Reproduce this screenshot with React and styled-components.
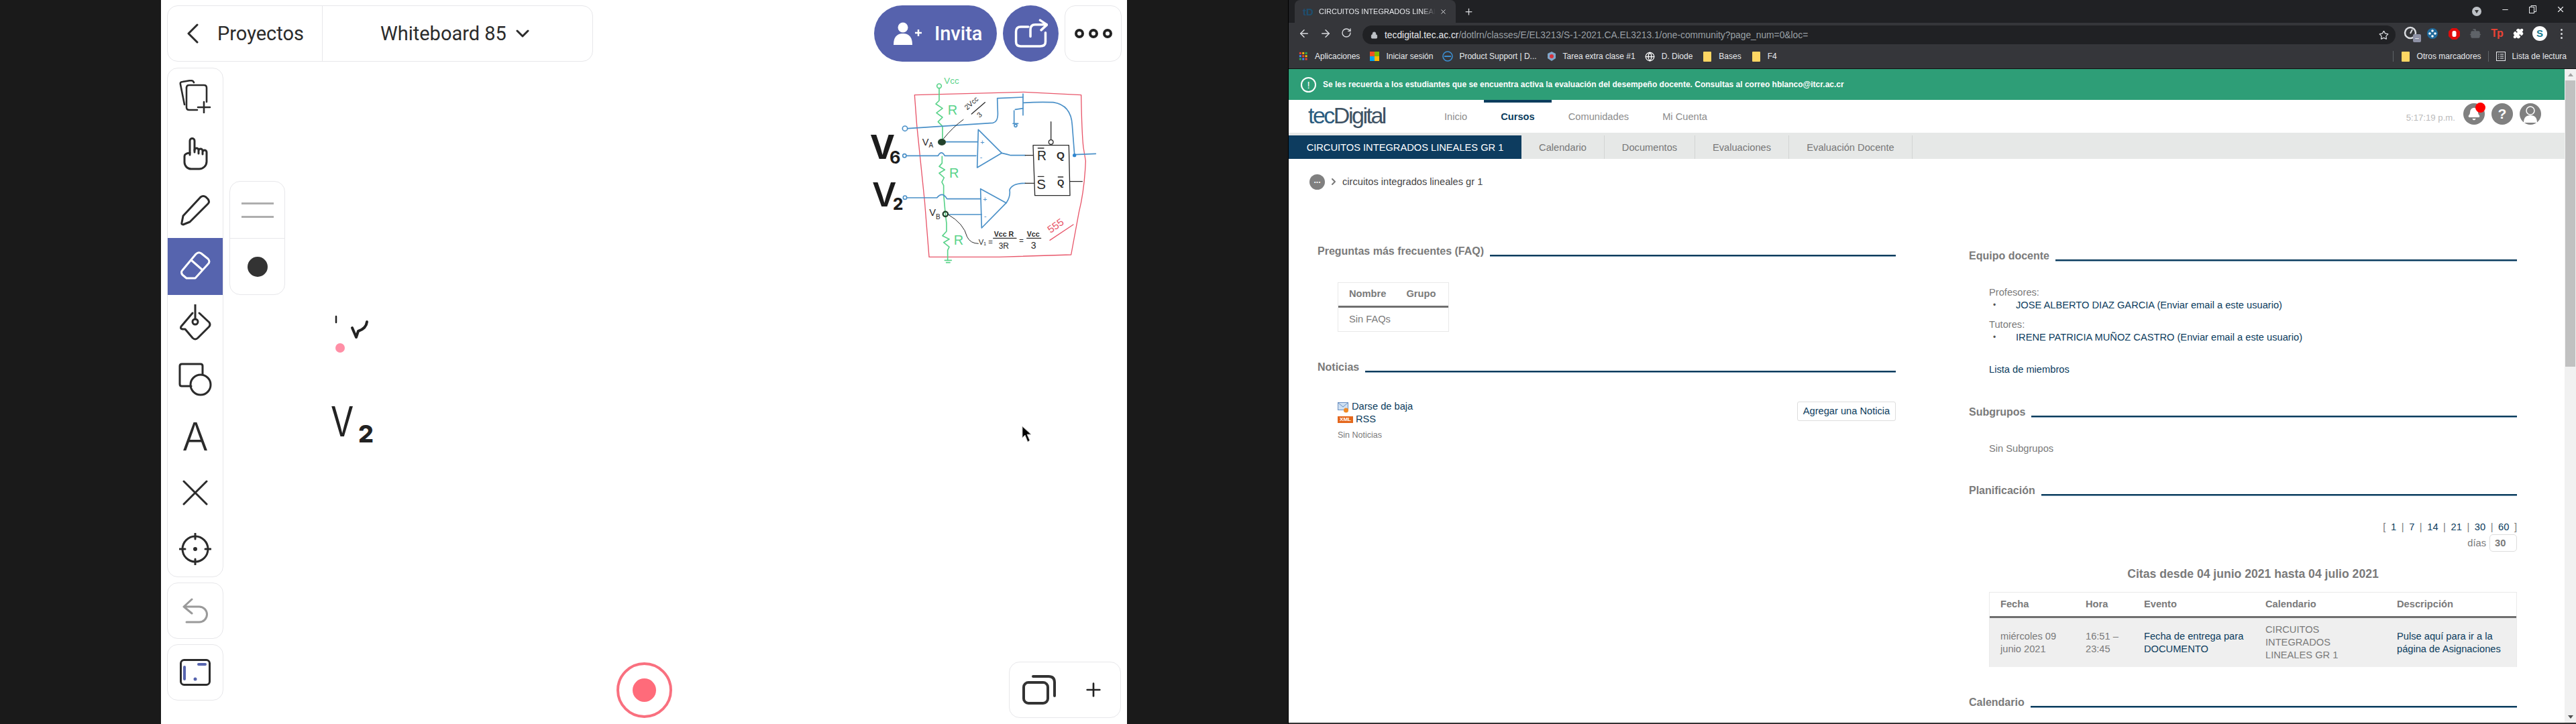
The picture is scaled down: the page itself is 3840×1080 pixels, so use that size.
import React from "react";
import styled, { createGlobalStyle } from "styled-components";
import { ArrowLeft, ArrowRight, RotateCw, Lock, Star, Plus, X, Minus, Bell, Puzzle, Bot, ChevronRight, Globe } from "lucide-react";

const SANS = `"Liberation Sans", Arial, sans-serif`;
const NAVY = "#0b3c5d";
const GREY = "#7a7a7a";

const Global = createGlobalStyle`
  html, body { margin: 0; padding: 0; background: #1a1a1a; overflow: hidden; }
  * { box-sizing: border-box; }
  body { font-family: ${SANS}; }
`;

const Screen = styled.div`
  width: 3840px; height: 1080px; display: flex; background: #1a1a1a; overflow: hidden;
`;

/* ---------- whiteboard ---------- */
const Board = styled.section`
  position: relative; width: 1440px; height: 1080px; margin-left: 240px; margin-right: 241px;
  background: #fff; padding: 8px 8px 0 9px; display: flex; flex-direction: column; gap: 9px; flex: none;
  font-family: Inter, sans-serif; color: #2b2b2b;
`;
const TopRow = styled.div` display: flex; height: 84px; `;
const TitleBar = styled.div`
  width: 635px; display: flex; border: 1px solid #e7e7ea; border-radius: 16px; background: #fff;
`;
const BackCell = styled.div`
  width: 231px; display: flex; align-items: center; padding-left: 28px; gap: 28px;
  border-right: 1px solid #e7e7ea; font-size: 29px; font-family: Roboto, sans-serif;
`;
const NameCell = styled.div`
  flex: 1; display: flex; align-items: center; padding-left: 86px; gap: 14px; font-size: 29px; font-family: Roboto, sans-serif;
`;
const Actions = styled.div` margin-left: auto; display: flex; gap: 9px; `;
const InviteButton = styled.div`
  width: 183px; border-radius: 42px; background: #5662ad; color: #fff; display: flex; align-items: center;
  padding-left: 28px; gap: 18px; font: 500 29px Roboto, sans-serif;
`;
const ShareButton = styled.div`
  width: 83px; border-radius: 50%; background: #5662ad; display: flex; align-items: center; justify-content: center;
`;
const MoreButton = styled.div`
  width: 85px; border: 1px solid #e7e7ea; border-radius: 16px; display: flex; align-items: center; justify-content: center; gap: 7px;
`;
const MoreDot = styled.span` width: 14px; height: 14px; border: 4px solid #222; border-radius: 50%; `;

const WorkRow = styled.div` display: flex; gap: 9px; align-items: flex-start; `;
const RailColumn = styled.div` display: flex; flex-direction: column; gap: 8px; width: 84px; `;
const Panel = styled.div`
  border: 1px solid #e7e7ea; border-radius: 16px; background: #fff; overflow: hidden;
`;
const Rail = styled(Panel)` height: 760px; display: flex; flex-direction: column; `;
const RailItem = styled.div`
  height: 84.4px; display: flex; align-items: center; justify-content: center; flex: none;
  background: ${p => (p.$active ? "#5664ae" : "transparent")};
  color: ${p => (p.$active ? "#fff" : "#2b2b2b")};
`;
const TextTool = styled.span` font: 300 58px Inter, sans-serif; line-height: 1; `;
const SmallPanel = styled(Panel)` height: 84px; display: flex; align-items: center; justify-content: center; `;
const SubPanel = styled(Panel)` width: 83px; height: 170px; margin-top: 169px; display: flex; flex-direction: column; `;
const SubCell = styled.div`
  height: 85px; display: flex; flex-direction: column; align-items: center; justify-content: center; gap: 17px;
  & + & { border-top: 1px solid #e7e7ea; }
`;
const WidthLine = styled.span` width: 48px; height: 3px; background: #aeaeae; `;
const InkDot = styled.span` width: 30px; height: 30px; border-radius: 50%; background: #333; `;

const RecordButton = styled.div`
  position: absolute; left: 679px; top: 988px; width: 83px; height: 83px; border-radius: 50%;
  border: 4px solid #f9707f; display: flex; align-items: center; justify-content: center;
`;
const RecordCore = styled.span` width: 35px; height: 35px; border-radius: 50%; background: #ff6b7a; `;
const PagesPanel = styled(Panel)`
  position: absolute; right: 9px; top: 987px; width: 167px; height: 84px; display: flex; align-items: center;
  padding-left: 19px; gap: 40px;
`;
const CanvasLayer = styled.svg` position: absolute; pointer-events: none; overflow: visible; `;
const SketchText = styled.text`
  font-family: ${p => p.$family || SANS}; font-weight: ${p => p.$weight || 400};
  font-size: ${p => p.$size}px; fill: ${p => p.$fill};
`;
const PinkDot = styled.span`
  position: absolute; left: 260px; top: 512px; width: 14px; height: 14px; border-radius: 50%; background: #ff8fa6;
`;

const S = ({ children, w = 48, h = 48, sw = 3, c = "currentColor", vb }) => (
  <svg width={w} height={h} viewBox={vb || `0 0 ${w} ${h}`} fill="none" stroke={c} strokeWidth={sw} strokeLinecap="round" strokeLinejoin="round">{children}</svg>
);

const Sketch = () => (
  <CanvasLayer style={{ left: 1010, top: 100 }} width="450" height="300" viewBox="0 300 1350 900" fill="none" strokeLinecap="round" strokeLinejoin="round">
    <g stroke="#e8566a" strokeWidth="4">
      <path d="M340 425 L830 412 L1085 425 Q1088 600 1095 660 L1105 720 Q1100 850 1075 950 L1040 1140 L720 1150 L405 1150 L385 900 L350 560 Z" />
      <path d="M945 1075 L1050 1005" />
    </g>
    <g stroke="#5ad38a" strokeWidth="5">
      <circle cx="450" cy="385" r="10" />
      <path d="M450 395 V450 L435 465 L465 485 L438 505 L465 525 L445 545 L465 565 V635" />
      <path d="M463 700 V730 L450 745 L475 760 L450 775 L472 795 L462 815 L470 830 V870 L478 960 L483 1000 V1035 L465 1055 L495 1070 L470 1085 L495 1105 L488 1120 V1165" />
      <path d="M475 1165 H505 M482 1175 H498" />
    </g>
    <g stroke="#4a90c8" strokeWidth="5">
      <circle cx="297" cy="575" r="11" />
      <path d="M310 575 L690 550 Q715 545 712 500 L710 440 L825 435" />
      <path d="M825 420 V515 M825 460 Q900 455 960 458 Q1040 470 1045 560 L1055 690 M1055 692 L1150 688" />
      <path d="M790 490 L825 485 M785 495 V550 M780 553 H803" />
      <circle cx="792" cy="562" r="6" />
      <path d="M625 580 L730 685 L620 750 Z" />
      <path d="M470 635 H620 M305 697 H445 Q460 670 475 697 H615 M730 685 Q755 690 770 695 H835" />
      <circle cx="295" cy="697" r="8" />
      <path d="M635 845 L750 908 L640 1020 Z" />
      <path d="M305 885 H440 Q465 855 485 890 H635 M490 960 H640 M750 908 Q770 880 765 850 Q775 820 835 820" />
      <circle cx="297" cy="884" r="8" />
    </g>
    <circle cx="1055" cy="695" r="8" fill="#2f86d0" />
    <g stroke="#2a2a2a" strokeWidth="4">
      <path d="M835 695 H870 M835 820 H875 M870 650 H1030 L1035 875 L878 875 Z M950 545 V625 M1035 812 H1090" />
      <circle cx="950" cy="636" r="10" />
      <path d="M470 620 Q510 570 558 535 M490 960 Q560 1000 575 1060 Q590 1090 625 1090" strokeWidth="3" />
      <path d="M892 663 H918 M892 790 H918 M982 792 H1004 M692 1066 H795 M842 1066 H905 M595 510 L655 458" />
    </g>
    <ellipse cx="462" cy="636" rx="18" ry="15" fill="#22422c" />
    <circle cx="478" cy="958" r="11" stroke="#22422c" strokeWidth="7" />
    <SketchText $size={60} $fill="#5ad38a" x="488" y="513">R</SketchText>
    <SketchText $size={60} $fill="#5ad38a" x="495" y="796">R</SketchText>
    <SketchText $size={60} $fill="#5ad38a" x="515" y="1094">R</SketchText>
    <SketchText $size={40} $fill="#5ad38a" x="472" y="376">Vcc</SketchText>
    <SketchText $size={44} $fill="#2a2a2a" x="374" y="650">V<tspan fontSize="30" dy="10">A</tspan></SketchText>
    <SketchText $size={44} $fill="#2a2a2a" x="406" y="966">V<tspan fontSize="30" dy="14">B</tspan></SketchText>
    <SketchText $size={32} $fill="#4a90c8" x="634" y="648">+</SketchText>
    <SketchText $size={32} $fill="#4a90c8" x="632" y="714">-</SketchText>
    <SketchText $size={32} $fill="#4a90c8" x="646" y="903">+</SketchText>
    <SketchText $size={32} $fill="#4a90c8" x="651" y="978">-</SketchText>
    <SketchText $size={58} $fill="#2a2a2a" x="888" y="718">R</SketchText>
    <SketchText $size={46} $weight={700} $fill="#2a2a2a" x="975" y="712">Q</SketchText>
    <SketchText $size={62} $fill="#2a2a2a" x="886" y="846">S</SketchText>
    <SketchText $size={40} $weight={700} $fill="#2a2a2a" x="978" y="832">Q</SketchText>
    <SketchText $size={32} $fill="#2a2a2a" transform="rotate(-42 590 480)" x="570" y="480">2Vcc</SketchText>
    <SketchText $size={32} $fill="#2a2a2a" transform="rotate(-42 640 520)" x="628" y="520">3</SketchText>
    <SketchText $size={34} $fill="#2a2a2a" x="626" y="1095">V₁ =</SketchText>
    <SketchText $size={32} $weight={700} $fill="#2a2a2a" x="695" y="1058">Vcc R</SketchText>
    <SketchText $size={36} $fill="#2a2a2a" x="716" y="1114">3R</SketchText>
    <SketchText $size={34} $fill="#2a2a2a" x="808" y="1090">=</SketchText>
    <SketchText $size={32} $weight={700} $fill="#2a2a2a" x="842" y="1060">Vcc</SketchText>
    <SketchText $size={42} $fill="#2a2a2a" x="860" y="1112">3</SketchText>
    <SketchText $size={46} $fill="#e8566a" transform="rotate(-35 948 1045)" x="948" y="1045">555</SketchText>
    <SketchText $size={150} $weight={700} $family="Inter, sans-serif" $fill="#1c1c1c" x="140" y="712">V<tspan fontSize="76" dx="-24" dy="21">6</tspan></SketchText>
    <SketchText $size={150} $weight={600} $family="Inter, sans-serif" $fill="#1c1c1c" x="150" y="925">V<tspan fontSize="72" fontWeight="800" dx="-16" dy="15">2</tspan></SketchText>
  </CanvasLayer>
);

const LooseInk = () => (
  <CanvasLayer style={{ left: 240, top: 460 }} width="100" height="210" viewBox="0 0 100 210" fill="none" strokeLinecap="round" strokeLinejoin="round">
    <path d="M261 12 V21" stroke="#222" strokeWidth="2.5" transform="translate(-240 0)" />
    <path d="M307 20 Q306 30 294 34 L291 43 M285 29 L291 43" stroke="#222" strokeWidth="4" transform="translate(-240 0)" />
  </CanvasLayer>
);
const V2Ink = () => (
  <CanvasLayer style={{ left: 250, top: 600 }} width="90" height="70" viewBox="0 0 90 70">
    <SketchText $size={62} $weight={400} $family="Inter, sans-serif" $fill="#222" transform="translate(3 0) scale(.8 1)" x="0" y="51">V</SketchText>
    <SketchText $size={36} $weight={800} $family="Inter, sans-serif" $fill="#222" x="44" y="60">2</SketchText>
  </CanvasLayer>
);
const Cursor = () => (
  <CanvasLayer style={{ left: 1283, top: 635 }} width="16" height="26" viewBox="0 0 16 26">
    <path d="M1 1 L1 18 L5 14 L9 24 L12 22 L8 13 L14 13 Z" fill="#000" stroke="#bbb" strokeWidth="1" />
  </CanvasLayer>
);

const Whiteboard = () => (
  <Board>
    <TopRow>
      <TitleBar>
        <BackCell>
          <S w={18} h={30} sw={3}><path d="M16 2 L3 15 L16 28" /></S>
          Proyectos
        </BackCell>
        <NameCell>
          Whiteboard 85
          <S w={20} h={14} sw={3}><path d="M2 3 L10 11 L18 3" /></S>
        </NameCell>
      </TitleBar>
      <Actions>
        <InviteButton>
          <svg width="44" height="34" viewBox="0 0 44 34" fill="#fff">
            <circle cx="15" cy="8" r="7.5" />
            <path d="M1 34 Q1 17 15 17 Q29 17 29 34 Z" />
            <path d="M33 16 h10 M38 11 v10" stroke="#fff" strokeWidth="2.5" />
          </svg>
          Invita
        </InviteButton>
        <ShareButton>
          <S w={50} h={44} vb="785 78 156 136" sw={11} c="#fff">
            <path d="M850 115 H815 Q793 115 793 137 V185 Q793 205 815 205 H905 Q930 205 930 185 V142" />
            <path d="M860 160 V128 Q860 105 882 105 H935 M905 84 L937 105 L910 130" />
          </S>
        </ShareButton>
        <MoreButton><MoreDot /><MoreDot /><MoreDot /></MoreButton>
      </Actions>
    </TopRow>
    <WorkRow>
      <RailColumn>
        <Rail>
          <RailItem>
            <S h={50} sw={2.6}><path d="M8 37 L2 7 Q1 3 5 3 L17 1 Q21 1 22 4" /><path d="M11 12 Q11 8 15 8 H37 Q41 8 41 12 V33" /><path d="M11 12 V41 Q11 45 15 45 H27" /><path d="M28 41 H46 M37 33 V49" /></S>
          </RailItem>
          <RailItem>
            <S w={48} h={52}><path d="M16 28 V7 A3.5 3.5 0 0 1 23 7 V24" /><path d="M23 21 A3 3 0 0 1 29 21 V26 M29 22 A3 3 0 0 1 35 22 V27 M35 24 A3 3 0 0 1 41 24 V38 A11 11 0 0 1 30 49 H18 A10 10 0 0 1 8 39 V30 Q8 26 16 25" /></S>
          </RailItem>
          <RailItem>
            <S><path d="M6 33 L32 5 Q36 2 40 5 L43 8 Q46 12 43 15 L16 42 L6 46 Q3 46 4 43 Z" /></S>
          </RailItem>
          <RailItem $active>
            <S><path d="M5 30 L25 6 Q29 2 33 5 L43 13 Q47 17 43 21 L24 42 H11 L5 37 Q2 33 5 30 Z" /><path d="M18 15 L34 29" /></S>
          </RailItem>
          <RailItem>
            <S w={50} h={56}><path d="M25 0 V22" /><circle cx="25" cy="26" r="4" /><path d="M21 13 L4 33 Q2 36 6 37 L10 37 L21 50 Q25 54 29 50 L46 33 Q48 30 46 27 L31 13" /></S>
          </RailItem>
          <RailItem>
            <S w={50} h={50}><path d="M19 35 H5 Q2 35 2 32 V5 Q2 2 5 2 H33 Q36 2 36 5 V17" /><circle cx="33" cy="33" r="15" /></S>
          </RailItem>
          <RailItem><TextTool>A</TextTool></RailItem>
          <RailItem>
            <S w={38} h={38}><path d="M2 2 L36 36 M36 2 L2 36" /></S>
          </RailItem>
          <RailItem>
            <S><circle cx="24" cy="24" r="19" /><circle cx="24" cy="24" r="1.5" fill="currentColor" /><path d="M24 1 V9 M24 39 V47 M1 24 H9 M39 24 H47" /></S>
          </RailItem>
        </Rail>
        <SmallPanel>
          <S w={40} h={38} c="#9a9a9a"><path d="M3 13 L15 2 M3 13 L15 23 M3 13 H26 A11.5 11.5 0 0 1 26 36 H7" /></S>
        </SmallPanel>
        <SmallPanel>
          <svg width="46" height="40" viewBox="0 0 46 40" fill="none">
            <rect x="1.5" y="1.5" width="43" height="37" rx="5" stroke="#2b2b2b" strokeWidth="3" />
            <path d="M7 12 V30 M28 8 H38" stroke="#5664ae" strokeWidth="4" strokeLinecap="round" />
            <circle cx="23" cy="30" r="2.5" fill="#5664ae" />
          </svg>
        </SmallPanel>
      </RailColumn>
      <SubPanel>
        <SubCell><WidthLine /><WidthLine /></SubCell>
        <SubCell><InkDot /></SubCell>
      </SubPanel>
    </WorkRow>
    <Sketch />
    <LooseInk />
    <PinkDot />
    <V2Ink />
    <Cursor />
    <RecordButton><RecordCore /></RecordButton>
    <PagesPanel>
      <S w={50} h={44} c="#333" sw={4}><rect x="2" y="11" width="36" height="31" rx="7" /><path d="M16 2 H39 Q48 2 48 11 V31" /></S>
      <Plus size={32} strokeWidth={2} color="#222" />
    </PagesPanel>
  </Board>
);

/* ---------- browser chrome ---------- */
const Browser = styled.section`
  width: 1919px; height: 1080px; display: flex; flex-direction: column; flex: none; font-family: ${SANS}; background: #fff;
  box-shadow: -1px 0 0 #000;
`;
const TabStrip = styled.div` height: 34px; background: #202124; display: flex; align-items: stretch; padding-left: 9px; color: #e8eaed; flex: none; `;
const ChromeTab = styled.div`
  width: 240px; background: #35363a; border-radius: 8px 8px 0 0; display: flex; align-items: center; padding: 0 10px 0 12px; gap: 6px;
`;
const Favicon = styled.span` font: 700 15px ${SANS}; color: #1e4e6e; width: 18px; `;
const TabTitle = styled.span`
  width: 174px; font-size: 11px; white-space: nowrap; overflow: hidden; color: #e8eaed;
  -webkit-mask-image: linear-gradient(90deg, #000 88%, transparent);
  mask-image: linear-gradient(90deg, #000 88%, transparent);
`;
const NewTab = styled.div` display: flex; align-items: center; margin-left: 12px; `;
const WindowControls = styled.div` margin-left: auto; display: flex; align-items: center; gap: 29px; padding: 0 16px 6px 0; `;
const ProfileChip = styled.span`
  width: 14px; height: 14px; border-radius: 50%; background: #bdc1c6; margin-top: 6px; display: flex; align-items: center; justify-content: center;
  &::after { content: ""; border-left: 3px solid transparent; border-right: 3px solid transparent; border-top: 5px solid #333; }
`;
const Toolbar = styled.div` height: 32px; background: #35363a; display: flex; align-items: center; padding-left: 14px; color: #dadce0; flex: none; `;
const NavGroup = styled.div` display: flex; gap: 14px; width: 96px; `;
const Omnibox = styled.div`
  align-self: flex-end; height: 28px; width: 1540px; background: #202124; border-radius: 14px; display: flex; align-items: center; padding: 0 10px 0 12px;
`;
const Url = styled.span` margin-left: 10px; font-size: 13.8px; white-space: nowrap; color: #9aa0a6; `;
const UrlHost = styled.span` color: #e8eaed; `;
const Extensions = styled.div` display: flex; align-items: center; margin-left: 7px; `;
const ExtSlot = styled.span` width: 32px; height: 28px; display: flex; align-items: center; justify-content: center; position: relative; `;
const ExtBadge = styled.span`
  position: absolute; right: 1px; bottom: 1px; width: 12px; height: 12px; border-radius: 2px; background: #8f92a6; color: #fff; font: 700 8px ${SANS}; text-align: center; line-height: 11px;
`;
const TpMark = styled.span` color: #ea4335; font: 700 16px ${SANS}; letter-spacing: -1px; `;
const AvatarMark = styled.span`
  width: 22px; height: 22px; border-radius: 50%; background: #fff; color: #167a8f; font: 700 15px ${SANS}; text-align: center; line-height: 22px;
`;
const DotMenu = styled.span` display: flex; flex-direction: column; gap: 3px; `;
const DotPip = styled.i` width: 3px; height: 3px; border-radius: 50%; background: #dadce0; `;
const BookmarkBar = styled.div`
  height: 37px; background: #35363a; border-bottom: 1px solid #111; display: flex; align-items: center; padding: 0 14px 0 14px; color: #e8eaed; font-size: 12px; flex: none; gap: 14px;
`;
const Bookmark = styled.span` display: flex; align-items: center; gap: 9px; white-space: nowrap; `;
const BarDivider = styled.span` width: 1px; height: 16px; background: #5f6368; `;
const BarRight = styled.div` margin-left: auto; display: flex; align-items: center; gap: 10px; `;
const FolderGlyph = styled.span` width: 12px; height: 15px; background: #fdd663; border-radius: 1px; margin: 0 2px; `;
const IconBox = styled.span` width: 16px; height: 16px; display: flex; align-items: center; justify-content: center; `;

const PageWrap = styled.div` flex: 1; min-height: 0; display: flex; `;
const Page = styled.div` width: 1902px; display: flex; flex-direction: column; overflow: hidden; `;
const ScrollTrack = styled.div` width: 17px; background: #f1f1f1; display: flex; flex-direction: column; align-items: center; `;
const ScrollArrow = styled.span`
  height: 17px; flex: none; display: flex; align-items: center;
  margin-top: ${p => (p.$down ? "auto" : 0)};
  &::after { content: ""; border-left: 4px solid transparent; border-right: 4px solid transparent;
    ${p => (p.$down ? "border-top: 5px solid #505050;" : "border-bottom: 5px solid #a3a3a3;")} }
`;
const ScrollThumb = styled.span` width: 15px; height: 427px; background: #c1c1c1; `;
const BottomEdge = styled.div` height: 2px; background: #333; flex: none; `;

const Alert = styled.div`
  height: 46px; background: #2e9e77; color: #fff; display: flex; align-items: center; padding-left: 18px; gap: 10px; font: 700 12px ${SANS}; flex: none;
`;
const AlertIcon = styled.span`
  width: 23px; height: 23px; border: 2px solid #fff; border-radius: 50%; font-size: 15px; font-weight: 400; display: flex; align-items: center; justify-content: center;
`;
const SiteHeader = styled.div` height: 49px; display: flex; padding-left: 29px; padding-right: 35px; flex: none; `;
const Logo = styled.div` width: 178px; font: 300 34px ${SANS}; letter-spacing: -2.5px; color: #3e5263; line-height: 46px; `;
const LogoTec = styled.span` color: #2a5c80; `;
const MainNav = styled.div` display: flex; `;
const MainLink = styled.div`
  padding: 0 25px 3px; display: flex; align-items: center; font-size: 14.67px;
  border-top: 4px solid ${p => (p.$current ? NAVY : "transparent")};
  color: ${p => (p.$current ? NAVY : "#8c8c8c")}; font-weight: ${p => (p.$current ? 700 : 400)};
`;
const UserTools = styled.div` margin-left: auto; display: flex; align-items: flex-start; padding-top: 5px; gap: 10px; position: relative; `;
const Clock = styled.span` font-size: 13.2px; color: #bbb; margin: 14px 2px 0 0; `;
const RoundTool = styled.span`
  width: 32px; height: 32px; border-radius: 50%; background: #808080; color: #fff; display: flex; align-items: center; justify-content: center; position: relative; overflow: visible; font: 700 21px ${SANS};
`;
const RedPip = styled.span` position: absolute; right: -1px; top: -1px; width: 15px; height: 15px; background: #f00; border-radius: 50%; `;
const TabBar = styled.div` height: 39px; background: #e6e8e7; padding-top: 4px; display: flex; flex: none; font-size: 14.67px; `;
const ClassTab = styled.div` width: 347px; background: #0d3c5f; color: #fff; display: flex; align-items: center; justify-content: center; `;
const SubTab = styled.div` width: ${p => p.$w}px; display: flex; align-items: center; justify-content: center; color: #777; border-right: 1px solid #d2d4d3; `;
const Crumbs = styled.div` display: flex; align-items: center; padding: 22px 0 0 31px; gap: 5px; font-size: 14.67px; color: #444; height: 46px; flex: none; `;
const CrumbDot = styled.span`
  width: 23px; height: 23px; border-radius: 50%; background: #808080; color: #fff; display: flex; align-items: center; justify-content: center; font: 700 12px ${SANS}; line-height: 10px; padding-bottom: 5px;
`;
const Columns = styled.div` display: flex; padding-left: 43px; gap: 109px; flex: 1; font-size: 14.67px; color: ${GREY}; line-height: 19px; `;
const LeftColumn = styled.div` width: 862px; padding-top: 82px; flex: none; `;
const RightColumn = styled.div` width: 817px; padding-top: 89px; flex: none; `;
const SectionHead = styled.div` display: flex; gap: 9px; height: 20px; line-height: 20px; margin-top: ${p => p.$mt || 0}px; `;
const SectionTitle = styled.h3` margin: 0; font: 700 16px/20px ${SANS}; color: ${GREY}; white-space: nowrap; `;
const SectionRule = styled.span` flex: 1; height: 2px; margin-top: 15px; background: ${NAVY}; box-shadow: 0 1px 0 #7f9cb3; `;
const FaqTable = styled.div` width: 166px; height: 74px; margin: 36px 0 0 30px; border: 1px solid #e9e9e9; `;
const FaqHead = styled.div` height: 37px; border-bottom: 3px solid #6f6f6f; display: flex; gap: 30px; padding: 7px 0 0 16px; font-weight: 700; `;
const FaqBody = styled.div` padding: 8px 0 0 16px; `;
const NewsRow = styled.div` display: flex; justify-content: space-between; margin: 39px 0 0 30px; `;
const NewsLinks = styled.div` color: ${NAVY}; `;
const NewsLink = styled.div` display: flex; align-items: center; gap: 4px; `;
const XmlBadge = styled.span` width: 23px; height: 10px; background: #e4671c; color: #fff; font: 700 8px/10px ${SANS}; text-align: center; `;
const NewsEmpty = styled.div` font-size: 12.5px; margin-top: 5px; `;
const AddButton = styled.div`
  height: 29px; width: 147px; margin-top: 2px; border: 1px solid #ddd; border-radius: 3px; color: ${NAVY}; display: flex; align-items: center; justify-content: center;
`;
const Indented = styled.div` margin: ${p => p.$mt || 0}px 0 0 30px; `;
const Member = styled.div` display: flex; color: ${NAVY}; padding-left: 6px; `;
const Bullet = styled.span` width: 34px; color: #555; font-size: 12px; `;
const AppLink = styled.div` color: ${NAVY}; `;
const Pager = styled.div` margin-top: 35px; text-align: right; color: ${GREY}; word-spacing: 3.5px; `;
const PagerNum = styled.span` color: ${NAVY}; `;
const DaysRow = styled.div` display: flex; justify-content: flex-end; align-items: center; gap: 5px; margin-top: 1px; `;
const DaysBox = styled.span` width: 41px; height: 26px; border: 1px solid #ddd; border-radius: 5px; font-weight: 700; display: flex; align-items: center; padding-left: 7px; `;
const AgendaTitle = styled.h4` margin: 22px 0 0 30px; font: 700 17.6px/22px ${SANS}; color: ${GREY}; text-align: center; `;
const Agenda = styled.div` margin: 16px 0 0 30px; border: 1px solid #eaeaea; height: 112px; `;
const AgendaRow = styled.div`
  display: grid; grid-template-columns: 127px 87px 181px 196px 1fr; padding: 0 16px; align-items: center;
`;
const AgendaHead = styled(AgendaRow)` height: 38px; border-bottom: 3px solid #6f6f6f; font-weight: 700; `;
const AgendaBody = styled(AgendaRow)` height: 73px; background: #efefef; `;
const Cell = styled.span` color: ${p => (p.$link ? NAVY : GREY)}; padding-right: ${p => p.$pr || 0}px; `;

const OutlineIcon = ({ children, size = 16 }) => (
  <svg width={size} height={size} viewBox="0 0 16 16" fill="none">{children}</svg>
);

const Bookmarks = () => (
  <BookmarkBar>
    <Bookmark>
      <IconBox>
        <OutlineIcon size={14}>
          {["#ea4335","#fbbc05","#34a853","#4285f4","#ea4335","#fbbc05","#34a853","#4285f4","#ea4335"].map((c, i) => (
            <rect key={i} x={1 + (i % 3) * 5} y={1 + Math.floor(i / 3) * 5} width="3.4" height="3.4" fill={c} />
          ))}
        </OutlineIcon>
      </IconBox>
      Aplicaciones
    </Bookmark>
    <Bookmark>
      <IconBox>
        <OutlineIcon>
          <rect x="1" y="1" width="7" height="7" fill="#f25022" /><rect x="8" y="1" width="7" height="7" fill="#7fba00" />
          <rect x="1" y="8" width="7" height="7" fill="#00a4ef" /><rect x="8" y="8" width="7" height="7" fill="#ffb900" />
        </OutlineIcon>
      </IconBox>
      Iniciar sesión
    </Bookmark>
    <Bookmark>
      <IconBox><OutlineIcon><circle cx="8" cy="8" r="7" stroke="#3d8fd1" strokeWidth="1.6" /><path d="M3 8 H13" stroke="#3d8fd1" strokeWidth="2" /></OutlineIcon></IconBox>
      Product Support | D...
    </Bookmark>
    <Bookmark>
      <IconBox><OutlineIcon><path d="M8 1 L14 4 V11 L8 15 L2 11 V4 Z" fill="#7fa6c9" /><circle cx="8" cy="8" r="3" fill="#d8333d" /></OutlineIcon></IconBox>
      Tarea extra clase #1
    </Bookmark>
    <Bookmark><IconBox><Globe size={15} color="#fff" /></IconBox>D. Diode</Bookmark>
    <Bookmark><FolderGlyph />Bases</Bookmark>
    <Bookmark><FolderGlyph />F4</Bookmark>
    <BarRight>
      <BarDivider />
      <Bookmark><FolderGlyph />Otros marcadores</Bookmark>
      <BarDivider />
      <Bookmark>
        <IconBox>
          <OutlineIcon><rect x="1.5" y="1.5" width="13" height="13" stroke="#e8eaed" /><path d="M4 5 H5.5 M7 5 H12 M4 8 H5.5 M7 8 H12 M4 11 H5.5 M7 11 H12" stroke="#e8eaed" /></OutlineIcon>
        </IconBox>
        Lista de lectura
      </Bookmark>
    </BarRight>
  </BookmarkBar>
);

const BrowserWindow = () => (
  <Browser>
    <TabStrip>
      <ChromeTab>
        <Favicon>tD</Favicon>
        <TabTitle>CIRCUITOS INTEGRADOS LINEAL</TabTitle>
        <X size={11} color="#e8eaed" />
      </ChromeTab>
      <NewTab><Plus size={15} color="#dadce0" /></NewTab>
      <WindowControls>
        <ProfileChip />
        <Minus size={13} />
        <svg width="11" height="12" viewBox="0 0 11 12" fill="none" stroke="#e8eaed"><rect x=".5" y="2.5" width="7" height="9" /><path d="M3 2.5 V.5 H10.5 V9.5 H8" /></svg>
        <X size={14} />
      </WindowControls>
    </TabStrip>
    <Toolbar>
      <NavGroup>
        <ArrowLeft size={18} /><ArrowRight size={18} /><RotateCw size={16} />
      </NavGroup>
      <Omnibox>
        <Lock size={11} color="#bdc1c6" fill="#bdc1c6" />
        <Url><UrlHost>tecdigital.tec.ac.cr</UrlHost>/dotlrn/classes/E/EL3213/S-1-2021.CA.EL3213.1/one-community?page_num=0&amp;loc=</Url>
        <Star size={15} color="#dadce0" style={{ marginLeft: "auto" }} />
      </Omnibox>
      <Extensions>
        <ExtSlot>
          <svg width="22" height="22" viewBox="0 0 22 22" fill="none"><circle cx="10" cy="10" r="8" stroke="#dadce0" strokeWidth="2.5" /><path d="M10 11 L13 5" stroke="#dadce0" strokeWidth="2" /></svg>
          <ExtBadge>--</ExtBadge>
        </ExtSlot>
        <ExtSlot>
          <svg width="16" height="16" viewBox="0 0 16 16"><circle cx="8" cy="8" r="8" fill="#1f6a9c" /><circle cx="8" cy="4" r="1.8" fill="#fff" /><circle cx="8" cy="12" r="1.8" fill="#fff" /><circle cx="4" cy="8" r="1.8" fill="#fff" /><circle cx="12" cy="8" r="1.8" fill="#fff" /></svg>
        </ExtSlot>
        <ExtSlot>
          <svg width="17" height="17" viewBox="0 0 17 17"><path d="M5 0 H12 L17 5 V12 L12 17 H5 L0 12 V5 Z" fill="#e00a0a" /><rect x="5.5" y="4" width="6" height="9" rx="2.5" fill="#fff" /></svg>
        </ExtSlot>
        <ExtSlot><Bot size={18} color="#5f6368" fill="#5f6368" /></ExtSlot>
        <ExtSlot><TpMark>Tp</TpMark></ExtSlot>
        <ExtSlot><Puzzle size={16} color="#fff" fill="#fff" /></ExtSlot>
        <ExtSlot><AvatarMark>S</AvatarMark></ExtSlot>
        <ExtSlot><DotMenu><DotPip /><DotPip /><DotPip /></DotMenu></ExtSlot>
      </Extensions>
    </Toolbar>
    <Bookmarks />
    <PageWrap>
      <Page>
        <Alert>
          <AlertIcon>!</AlertIcon>
          Se les recuerda a los estudiantes que se encuentra activa la evaluación del desempeño docente. Consultas al correo hblanco@itcr.ac.cr
        </Alert>
        <SiteHeader>
          <Logo><LogoTec>tec</LogoTec>Digital</Logo>
          <MainNav>
            <MainLink>Inicio</MainLink>
            <MainLink $current>Cursos</MainLink>
            <MainLink>Comunidades</MainLink>
            <MainLink>Mi Cuenta</MainLink>
          </MainNav>
          <UserTools>
            <Clock>5:17:19 p.m.</Clock>
            <RoundTool><Bell size={20} color="#fff" fill="#fff" /><RedPip /></RoundTool>
            <RoundTool>?</RoundTool>
            <RoundTool>
              <svg width="24" height="26" viewBox="0 0 24 26" fill="#fff"><circle cx="12" cy="8" r="6" fill="none" stroke="#fff" strokeWidth="1.5" /><path d="M2 26 Q2 15 12 15 Q22 15 22 26 Z" /></svg>
            </RoundTool>
          </UserTools>
        </SiteHeader>
        <TabBar>
          <ClassTab>CIRCUITOS INTEGRADOS LINEALES GR 1</ClassTab>
          <SubTab $w={124}>Calendario</SubTab>
          <SubTab $w={135}>Documentos</SubTab>
          <SubTab $w={140}>Evaluaciones</SubTab>
          <SubTab $w={184}>Evaluación Docente</SubTab>
        </TabBar>
        <Crumbs>
          <CrumbDot>...</CrumbDot>
          <ChevronRight size={16} color="#777" strokeWidth={3} />
          circuitos integrados lineales gr 1
        </Crumbs>
        <Columns>
          <LeftColumn>
            <SectionHead><SectionTitle>Preguntas más frecuentes (FAQ)</SectionTitle><SectionRule /></SectionHead>
            <FaqTable>
              <FaqHead><span>Nombre</span><span>Grupo</span></FaqHead>
              <FaqBody>Sin FAQs</FaqBody>
            </FaqTable>
            <SectionHead $mt={43}><SectionTitle>Noticias</SectionTitle><SectionRule /></SectionHead>
            <NewsRow>
              <div>
                <NewsLinks>
                  <NewsLink>
                    <svg width="17" height="18" viewBox="0 0 17 18" fill="none"><rect x=".5" y="2.5" width="15" height="11" fill="#cfe0f2" stroke="#6a8fc0" /><path d="M1 3 L8 9 L15 3" stroke="#6a8fc0" /><circle cx="12.5" cy="14" r="3.5" fill="#f08a24" /></svg>
                    Darse de baja
                  </NewsLink>
                  <NewsLink><XmlBadge>XML</XmlBadge>RSS</NewsLink>
                </NewsLinks>
                <NewsEmpty>Sin Noticias</NewsEmpty>
              </div>
              <AddButton>Agregar una Noticia</AddButton>
            </NewsRow>
          </LeftColumn>
          <RightColumn>
            <SectionHead><SectionTitle>Equipo docente</SectionTitle><SectionRule /></SectionHead>
            <Indented $mt={35}>Profesores:</Indented>
            <Indented><Member><Bullet>•</Bullet>JOSE ALBERTO DIAZ GARCIA (Enviar email a este usuario)</Member></Indented>
            <Indented $mt={10}>Tutores:</Indented>
            <Indented><Member><Bullet>•</Bullet>IRENE PATRICIA MUÑOZ CASTRO (Enviar email a este usuario)</Member></Indented>
            <Indented $mt={29}><AppLink>Lista de miembros</AppLink></Indented>
            <SectionHead $mt={44}><SectionTitle>Subgrupos</SectionTitle><SectionRule /></SectionHead>
            <Indented $mt={35}>Sin Subgrupos</Indented>
            <SectionHead $mt={43}><SectionTitle>Planificación</SectionTitle><SectionRule /></SectionHead>
            <Pager>[ <PagerNum>1</PagerNum> | <PagerNum>7</PagerNum> | <PagerNum>14</PagerNum> | <PagerNum>21</PagerNum> | <PagerNum>30</PagerNum> | <PagerNum>60</PagerNum> ]</Pager>
            <DaysRow><span>días</span><DaysBox>30</DaysBox></DaysRow>
            <AgendaTitle>Citas desde 04 junio 2021 hasta 04 julio 2021</AgendaTitle>
            <Agenda>
              <AgendaHead><span>Fecha</span><span>Hora</span><span>Evento</span><span>Calendario</span><span>Descripción</span></AgendaHead>
              <AgendaBody>
                <Cell $pr={20}>miércoles 09 junio 2021</Cell>
                <Cell $pr={30}>16:51 – 23:45</Cell>
                <Cell $link>Fecha de entrega para DOCUMENTO</Cell>
                <Cell $pr={60}>CIRCUITOS INTEGRADOS LINEALES GR 1</Cell>
                <Cell $link>Pulse aquí para ir a la página de Asignaciones</Cell>
              </AgendaBody>
            </Agenda>
            <SectionHead $mt={43}><SectionTitle>Calendario</SectionTitle><SectionRule /></SectionHead>
          </RightColumn>
        </Columns>
      </Page>
      <ScrollTrack>
        <ScrollArrow />
        <ScrollThumb />
        <ScrollArrow $down />
      </ScrollTrack>
    </PageWrap>
    <BottomEdge />
  </Browser>
);

export default function App() {
  return (
    <>
      <Global />
      <Screen>
        <Whiteboard />
        <BrowserWindow />
      </Screen>
    </>
  );
}
